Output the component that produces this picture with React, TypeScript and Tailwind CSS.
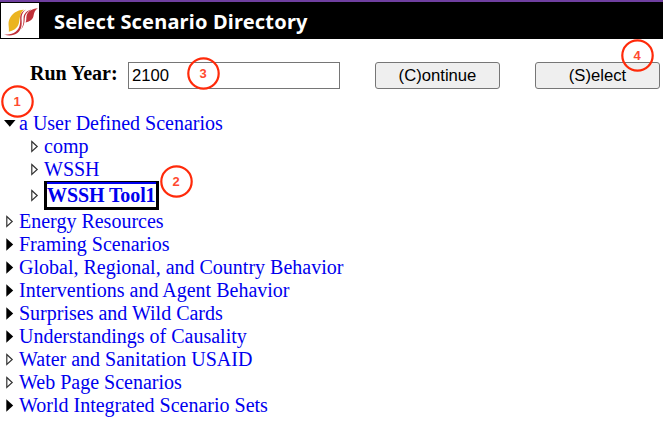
import React from "react";

type Marker = "open" | "closed" | "leaf";

function Arrow({ kind }: { kind: Marker }) {
  if (kind === "open") {
    return (
      <svg className="h-[23px] w-[19px] shrink-0" viewBox="0 0 19 23">
        <path d="M4 8H15.5L9.8 14.8Z" fill="#000" />
      </svg>
    );
  }
  return (
    <svg className="h-[23px] w-[19px] shrink-0" viewBox="0 0 19 23">
      {kind === "closed" ? (
        <path d="M6.3 5.3L13.2 11.5L6.3 17.7Z" fill="#000" />
      ) : (
        <path d="M6.8 6.5L12.2 11.5L6.8 16.5Z" fill="#fff" stroke="#333" strokeWidth="1.2" />
      )}
    </svg>
  );
}

const scenarios: { label: string; selected?: boolean }[] = [
  { label: "comp" },
  { label: "WSSH" },
  { label: "WSSH Tool1", selected: true },
];

const groups: { label: string; kind: Marker }[] = [
  { label: "Energy Resources", kind: "leaf" },
  { label: "Framing Scenarios", kind: "closed" },
  { label: "Global, Regional, and Country Behavior", kind: "closed" },
  { label: "Interventions and Agent Behavior", kind: "closed" },
  { label: "Surprises and Wild Cards", kind: "closed" },
  { label: "Understandings of Causality", kind: "closed" },
  { label: "Water and Sanitation USAID", kind: "leaf" },
  { label: "Web Page Scenarios", kind: "leaf" },
  { label: "World Integrated Scenario Sets", kind: "closed" },
];

function Badge({ n, place }: { n: number; place: string }) {
  return (
    <span className={`absolute flex size-[33px] items-center justify-center ${place}`}>
      <svg className="absolute inset-0 size-full" viewBox="0 0 33 33">
        <circle cx="16.5" cy="16.5" r="15.2" fill="none" stroke="#ff2a0a" strokeWidth="2.2" />
      </svg>
      <span className="pr-px font-['Liberation_Sans',sans-serif] text-[13px] leading-none font-bold text-[#ff4a30]">{n}</span>
    </span>
  );
}

function Logo() {
  return (
    <svg className="ml-px h-[35px] w-[38px] shrink-0 bg-white" viewBox="1 3 38 35">
      <path d="M23.8 9.8C17.5 9.6 11.5 13.8 9.1 20C7.7 24.2 9.4 27.5 8.8 31.8C13 31.2 17.5 28.4 18.8 23.6C20 18.6 19.4 13.4 23.8 9.8Z" fill="#ebb420" />
      <path d="M26.2 9.5C22 11 20 14.2 20.2 18.7C20.4 24.3 19.6 28.6 15.6 31.7C12.4 34.2 8.4 35 4 34.2C8.3 36.2 14 35.6 17.4 33C21.6 29.6 22 25.2 21.6 20C21.3 15.4 22.4 12 26.2 9.5Z" fill="#bf3038" />
      <path d="M31.3 9.6C26.8 10.9 23.8 13.8 23.6 17.6C23.4 21 24 24.8 21 29.2C24.5 25.6 24.6 21 24.7 18.4C24.9 14.6 27.4 11.6 31.3 9.6Z" fill="#bf3038" />
      <path d="M37.8 8.3C31.8 8.6 27.6 11.6 26.6 15.6C26 17.8 26.8 20 25.6 22.6C30.2 21.6 33.2 19.2 33.6 15.6C34 12.8 35 9.8 37.8 8.3Z" fill="#bf3038" />
    </svg>
  );
}

export default function App() {
  return (
    <main className="relative h-[426px] w-[663px] overflow-hidden bg-white font-['Liberation_Serif',serif] text-[20px] leading-[23px]">
      <header className="flex h-[39px] items-center border-t-2 border-[#6f3fa0] bg-black">
        <Logo />
        <h1 className="ml-[15px] pt-px font-['Noto_Sans',sans-serif] text-[20px] font-bold tracking-[0.19px] whitespace-nowrap text-white">
          Select Scenario Directory
        </h1>
      </header>

      <form className="flex h-[73px] items-start pt-[23px] pl-[30px]" onSubmit={(e) => e.preventDefault()}>
        <label className="w-[98px] font-bold whitespace-nowrap text-black" htmlFor="year">Run Year:</label>
        <input
          id="year"
          className="h-[27px] w-[212px] border border-[#767676] bg-white px-[3px] font-['Liberation_Sans',sans-serif] text-[16.67px] text-black"
          defaultValue="2100"
        />
        <button type="button" className="ml-[35px] h-[27px] w-[125px] rounded-[3px] border border-[#767676] bg-[#efefef] font-['Liberation_Sans',sans-serif] text-[16.67px] leading-[25px] text-black">(C)ontinue</button>
        <button type="button" className="ml-[35px] h-[27px] w-[125px] rounded-[3px] border border-[#767676] bg-[#efefef] font-['Liberation_Sans',sans-serif] text-[16.67px] leading-[25px] text-black">(S)elect</button>
      </form>

      <ul className="text-[#0000ee]">
        <li>
          <div className="flex h-[23px]"><Arrow kind="open" /><a>a User Defined Scenarios</a></div>
          <ul className="pl-[25px]">
            {scenarios.map((item) =>
              item.selected ? (
                <li key={item.label} className="flex h-[29px] items-center">
                  <Arrow kind="leaf" />
                  <a className="h-[29px] w-[115px] border-[3px] border-t border-black font-bold whitespace-nowrap">
                    <span className="block h-[25px] border-t-2 border-[#0000ee] leading-[23px] tracking-[-0.1px]">{item.label}</span>
                  </a>
                </li>
              ) : (
                <li key={item.label} className="flex h-[23px]">
                  <Arrow kind="leaf" />
                  <a>{item.label}</a>
                </li>
              ),
            )}
          </ul>
        </li>
        {groups.map((item) => (
          <li key={item.label} className="flex h-[23px]">
            <Arrow kind={item.kind} />
            <a className="whitespace-nowrap">{item.label}</a>
          </li>
        ))}
      </ul>

      <Badge n={1} place="top-[85px] left-[1px]" />
      <Badge n={2} place="top-[165px] left-[160px]" />
      <Badge n={3} place="top-[57px] left-[187px]" />
      <Badge n={4} place="top-[39px] left-[621px]" />
    </main>
  );
}
